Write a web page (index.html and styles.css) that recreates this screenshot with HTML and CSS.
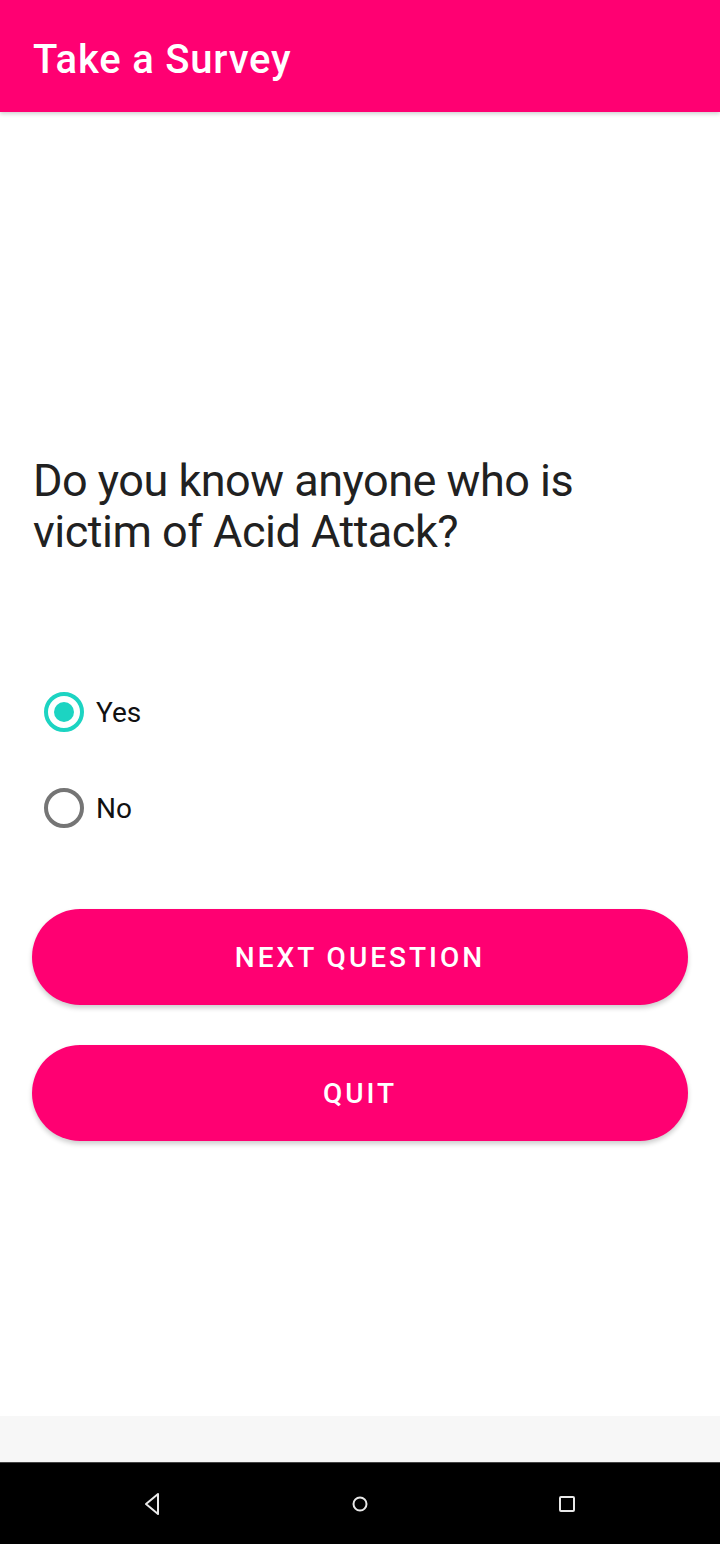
FILE: index.html
```html
<!DOCTYPE html>
<html>
<head>
<meta charset="utf-8">
<link rel="stylesheet" href="styles.css">
</head>
<body>
<div class="screen">
  <header class="appbar">
    <h1 class="appbar-title">Take a Survey</h1>
  </header>
  <main class="content">
    <p class="question">Do you know anyone who is victim of Acid Attack?</p>
    <div class="options">
      <label class="option">
        <span class="radio radio-checked"><span class="radio-dot"></span></span>
        <span class="option-label">Yes</span>
      </label>
      <label class="option">
        <span class="radio"></span>
        <span class="option-label">No</span>
      </label>
    </div>
    <div class="actions">
      <button class="btn">NEXT QUESTION</button>
      <button class="btn">QUIT</button>
    </div>
  </main>
  <div class="bottom-strip"></div>
  <nav class="navbar">
    <svg class="nav-icon" width="20" height="24" viewBox="0 0 20 24"><path d="M15 2 L3 12 L15 22 Z" fill="none" stroke="#e8e8e8" stroke-width="2" stroke-linejoin="round"/></svg>
    <svg class="nav-icon" width="20" height="20" viewBox="0 0 20 20"><circle cx="10" cy="10" r="6.5" fill="none" stroke="#e8e8e8" stroke-width="2"/></svg>
    <svg class="nav-icon" width="20" height="20" viewBox="0 0 20 20"><rect x="3" y="3" width="14" height="14" rx="1" fill="none" stroke="#e8e8e8" stroke-width="2"/></svg>
  </nav>
</div>
</body>
</html>
```

FILE: styles.css
```css
* { box-sizing: border-box; }
html, body { margin: 0; padding: 0; }
body { font-family: Roboto, "Noto Sans", sans-serif; background: #fff; }
.screen { width: 720px; height: 1544px; display: flex; flex-direction: column; }
.appbar {
  height: 112px; background: #ff0072; display: flex; align-items: center;
  padding: 6px 33px 0; box-shadow: 0 2px 4px rgba(0,0,0,0.18); position: relative; z-index: 1;
}
.appbar-title { margin: 0; color: #fff; font-size: 40px; font-weight: 500; letter-spacing: 0.8px; }
.content { flex: 1; padding: 0 32px; display: flex; flex-direction: column; }
.question {
  margin: 343px 0 0; font-size: 45px; line-height: 51px; color: #212121; font-weight: 400;
  padding: 0 1px; letter-spacing: -0.5px;
}
.options { margin-top: 107px; display: flex; flex-direction: column; }
.option { height: 96px; display: flex; align-items: center; }
.radio {
  width: 40px; height: 40px; border-radius: 50%; border: 4px solid #757575;
  margin-left: 12px; display: flex; align-items: center; justify-content: center;
}
.radio-checked { border-color: #1cd4c2; }
.radio-dot { width: 20px; height: 20px; border-radius: 50%; background: #1cd4c2; }
.option-label { margin-left: 12px; font-size: 28px; color: #111; }
.actions { margin-top: 53px; display: flex; flex-direction: column; gap: 40px; }
.btn {
  height: 96px; border: none; border-radius: 48px; background: #ff0072; color: #fff;
  font-family: Roboto, sans-serif; font-size: 28px; font-weight: 500; letter-spacing: 3px;
  box-shadow: 0 3px 5px rgba(0,0,0,0.2);
}
.bottom-strip { height: 46px; background: #f7f7f7; }
.navbar {
  height: 82px; background: #000; display: flex; align-items: center; justify-content: space-between;
  padding: 0 143px 0 143px; border-top: 1px solid #444;
}
```
